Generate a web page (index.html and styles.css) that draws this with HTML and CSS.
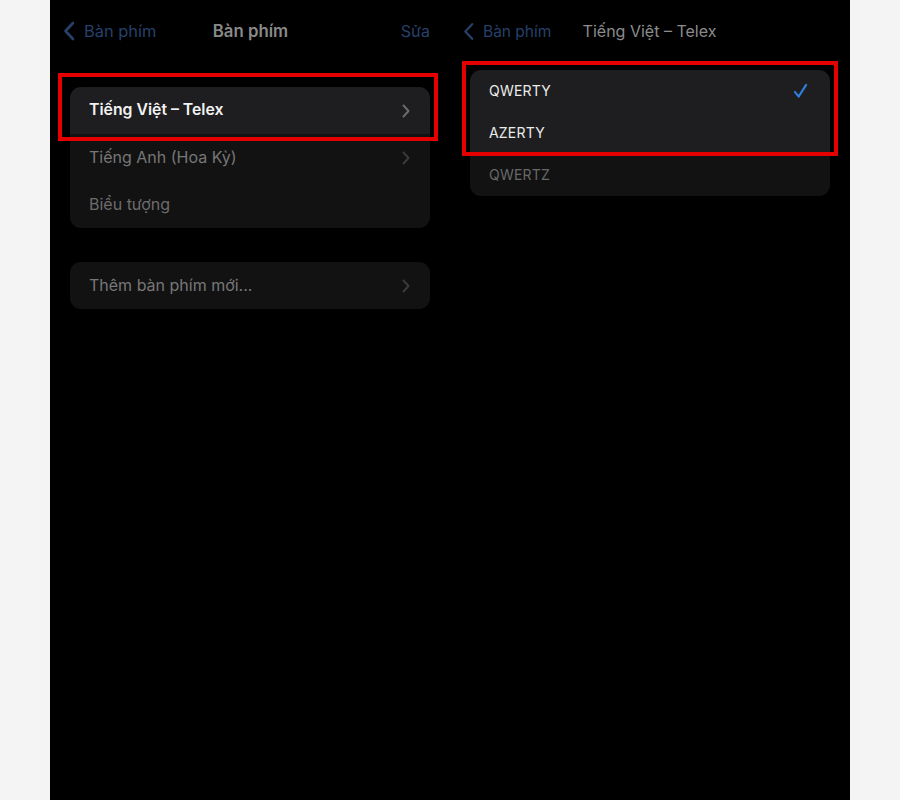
FILE: index.html
```html
<!DOCTYPE html>
<html lang="vi">
<head>
<meta charset="utf-8">
<title>Bàn phím</title>
<link rel="stylesheet" href="styles.css">
</head>
<body>
<div class="frame">
  <section class="panel">
    <header class="nav">
      <a class="back">
        <svg class="back-icon" viewBox="0 0 12 20" width="12" height="20"><path d="M10 2 L2.5 10 L10 18" fill="none" stroke="currentColor" stroke-width="2.6" stroke-linecap="round" stroke-linejoin="round"/></svg>
        <span>Bàn phím</span>
      </a>
      <h1 class="title bold">Bàn phím</h1>
      <a class="action">Sửa</a>
    </header>
    <div class="card">
      <div class="row bright top"><span class="label strong">Tiếng Việt – Telex</span><svg class="chev" viewBox="0 0 8 14" width="8" height="14"><path d="M1.5 1.5 L6.5 7 L1.5 12.5" fill="none" stroke="currentColor" stroke-width="2" stroke-linecap="round" stroke-linejoin="round"/></svg></div>
      <div class="row dim"><span class="label">Tiếng Anh (Hoa Kỳ)</span><svg class="chev" viewBox="0 0 8 14" width="8" height="14"><path d="M1.5 1.5 L6.5 7 L1.5 12.5" fill="none" stroke="currentColor" stroke-width="2" stroke-linecap="round" stroke-linejoin="round"/></svg></div>
      <div class="row dim bottom"><span class="label faint">Biểu tượng</span></div>
    </div>
    <div class="card second">
      <div class="row dim top bottom"><span class="label">Thêm bàn phím mới...</span><svg class="chev" viewBox="0 0 8 14" width="8" height="14"><path d="M1.5 1.5 L6.5 7 L1.5 12.5" fill="none" stroke="currentColor" stroke-width="2" stroke-linecap="round" stroke-linejoin="round"/></svg></div>
    </div>
    <div class="mark mark-left"></div>
  </section>

  <section class="panel right">
    <header class="nav">
      <a class="back small">
        <svg class="back-icon" viewBox="0 0 12 20" width="11" height="19"><path d="M10 2 L2.5 10 L10 18" fill="none" stroke="currentColor" stroke-width="2.4" stroke-linecap="round" stroke-linejoin="round"/></svg>
        <span>Bàn phím</span>
      </a>
      <h1 class="title">Tiếng Việt – Telex</h1>
      <span class="action"></span>
    </header>
    <div class="card list">
      <div class="row bright top"><span class="label">QWERTY</span><svg class="check" viewBox="0 0 16 16" width="15" height="16"><path d="M2 9 L6 14 L14 1.5" fill="none" stroke="currentColor" stroke-width="2.2" stroke-linecap="round" stroke-linejoin="round"/></svg></div>
      <div class="row bright"><span class="label">AZERTY</span></div>
      <div class="row dim bottom"><span class="label faint">QWERTZ</span></div>
    </div>
    <div class="mark mark-right"></div>
  </section>
</div>
</body>
</html>
```

FILE: styles.css
```css
html, body {
  margin: 0;
  padding: 0;
  background: #f4f4f4;
}
body {
  font-family: "Inter", "Noto Sans", "Liberation Sans", sans-serif;
}
.frame {
  width: 800px;
  height: 800px;
  margin: 0 auto;
  background: #000;
  display: flex;
}
.panel {
  position: relative;
  width: 400px;
  box-sizing: border-box;
  padding: 0 20px;
}
.nav {
  display: grid;
  grid-template-columns: 1fr auto 1fr;
  align-items: center;
  height: 22px;
  margin: 20px 0 0 -7px;
}
.back {
  display: flex;
  align-items: center;
  gap: 9px;
  color: #27416b;
  font-size: 16.4px;
}
.back.small {
  font-size: 15.5px;
}
.back-icon { display: block; }
.title {
  margin: 0;
  font-size: 16px;
  font-weight: 400;
  color: #8c8c8c;
  white-space: nowrap;
  position: relative;
  left: 3px;
}
.title.bold { font-size: 16.8px; font-weight: 600; color: #8a8a8a; left: 4px; }
.action {
  justify-self: end;
  color: #27416b;
  font-size: 16px;
}
.card {
  margin-top: 45px;
  border-radius: 11px;
  overflow: hidden;
}
.card.second { margin-top: 34px; }
.card.list { margin-top: 28px; }
.row {
  height: 47px;
  display: flex;
  align-items: center;
  justify-content: space-between;
  padding: 0 20px 0 19px;
}
.list .row { height: 42px; padding-right: 22px; }
.row.bright { background: #1e1e20; }
.row.dim { background: #121213; }
.label {
  font-size: 16px;
  color: #777;
  position: relative;
  top: -1px;
}
.label.strong { color: #f2f2f2; font-weight: 600; font-size: 15.8px; }
.label.faint { color: #6c6c6c; }
.list .label { font-size: 14px; color: #ececec; letter-spacing: 0.2px; }
.list .label.faint { color: #686868; }
.chev { color: #6a6a6d; display: block; }
.dim .chev { color: #3a3a3c; }
.check { color: #2f7ee0; display: block; }
.mark {
  position: absolute;
  border: 4px solid #e50000;
  box-sizing: border-box;
}
.mark-left { left: 8px; top: 73px; width: 380px; height: 68px; }
.mark-right { left: 12px; top: 61px; width: 376px; height: 95px; }
```
